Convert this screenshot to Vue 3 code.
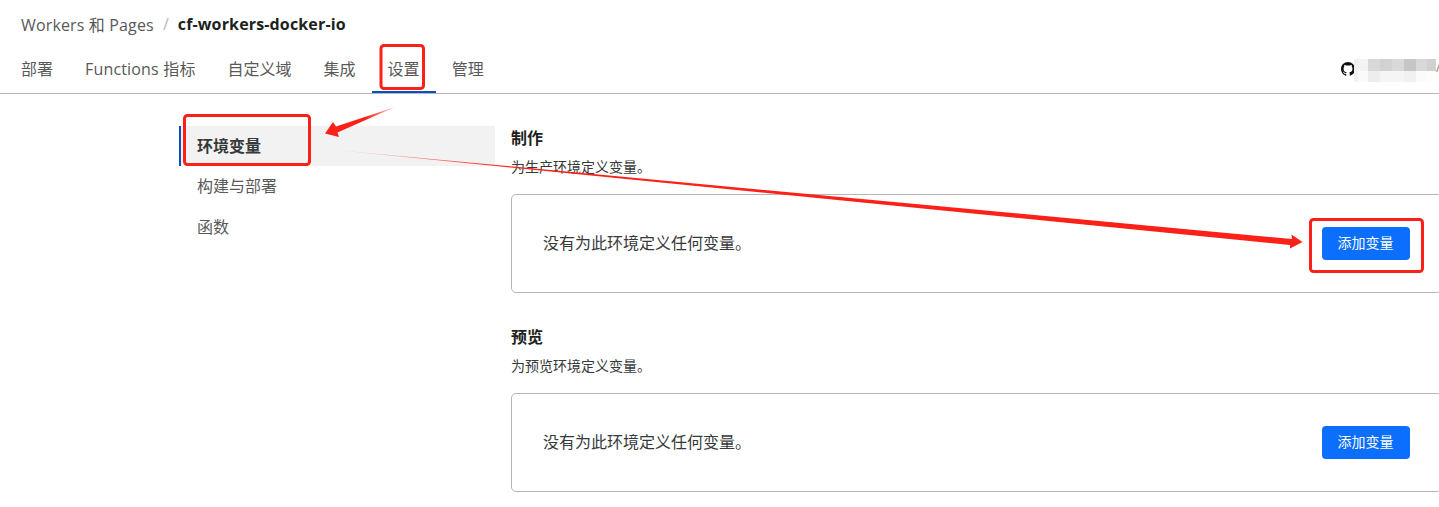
<script setup>
const tabs = ['部署', 'Functions 指标', '自定义域', '集成', '设置', '管理']
const navItems = ['环境变量', '构建与部署', '函数']
const sections = [
  { title: '制作', desc: '为生产环境定义变量。' },
  { title: '预览', desc: '为预览环境定义变量。' },
]
const blurTop = [
  { w: 4, c: '#f0f0f0' },
  { w: 10, c: '#f3f3f3' },
  { w: 12, c: '#d8d8d8' },
  { w: 12, c: '#d2d2d2' },
  { w: 12, c: '#d9d9d9' },
  { w: 12, c: '#c6c6c6' },
  { w: 11, c: '#d8d8d8' },
  { w: 9, c: '#d0d0d0' },
]
const blurBottom = [
  { w: 4, c: '#f0f0f0' },
  { w: 10, c: '#fafafa' },
  { w: 12, c: '#ededed' },
  { w: 12, c: '#f5f5f5' },
  { w: 12, c: '#f5f5f5' },
  { w: 12, c: '#f1f1f1' },
  { w: 11, c: '#fbfbfb' },
  { w: 9, c: '#fdfdfd' },
]
</script>

<template>
  <div class="page">
    <header class="top">
      <div class="crumbs">
        <span class="crumb">Workers 和 Pages</span>
        <span class="sep">/</span>
        <span class="current">cf-workers-docker-io</span>
      </div>
      <div class="tabbar">
        <nav class="tabs">
          <a
            v-for="tab in tabs"
            :key="tab"
            class="tab"
            :class="{ active: tab === '设置', latin: tab.startsWith('Functions') }"
          >{{ tab }}</a>
        </nav>
        <div class="repo">
          <svg class="gh" viewBox="0 0 16 16" width="14" height="14">
            <path fill="#111" d="M8 0C3.58 0 0 3.58 0 8c0 3.54 2.29 6.53 5.47 7.59.4.07.55-.17.55-.38 0-.19-.01-.82-.01-1.49-2.01.37-2.53-.49-2.69-.94-.09-.23-.48-.94-.82-1.13-.28-.15-.68-.52-.01-.53.63-.01 1.08.58 1.23.82.72 1.21 1.87.87 2.33.66.07-.52.28-.87.51-1.07-1.78-.2-3.64-.89-3.64-3.95 0-.87.31-1.59.82-2.15-.08-.2-.36-1.02.08-2.12 0 0 .67-.21 2.2.82.64-.18 1.32-.27 2-.27s1.36.09 2 .27c1.53-1.04 2.2-.82 2.2-.82.44 1.1.16 1.92.08 2.12.51.56.82 1.27.82 2.15 0 3.07-1.87 3.75-3.65 3.95.29.25.54.73.54 1.48 0 1.07-.01 1.93-.01 2.2 0 .21.15.46.55.38A8.01 8.01 0 0 0 16 8c0-4.42-3.58-8-8-8z" />
          </svg>
          <div class="mosaic">
            <div class="mosaic-row">
              <i v-for="(b, i) in blurTop" :key="i" :style="{ width: b.w + 'px', background: b.c }"></i>
            </div>
            <div class="mosaic-row short">
              <i v-for="(b, i) in blurBottom" :key="i" :style="{ width: b.w + 'px', background: b.c }"></i>
            </div>
          </div>
          <span class="slash">/</span>
        </div>
      </div>
    </header>

    <div class="body">
      <aside class="side">
        <a v-for="(item, i) in navItems" :key="item" class="side-item" :class="{ active: i === 0 }">{{ item }}</a>
      </aside>
      <main class="main">
        <section v-for="s in sections" :key="s.title" class="section">
          <h3>{{ s.title }}</h3>
          <p class="desc">{{ s.desc }}</p>
          <div class="card">
            <span class="empty">没有为此环境定义任何变量。</span>
            <button class="btn">添加变量</button>
          </div>
        </section>
      </main>
    </div>

    <!-- red marks drawn on top of the screenshot -->
    <svg class="marks" width="1439" height="507" viewBox="0 0 1439 507">
      <defs>
        <linearGradient id="tail1" gradientUnits="userSpaceOnUse" x1="395" y1="107" x2="365" y2="118">
          <stop offset="0" stop-color="#fb2118" stop-opacity="0.25" />
          <stop offset="1" stop-color="#fb2118" />
        </linearGradient>
        <linearGradient id="tail2" gradientUnits="userSpaceOnUse" x1="335" y1="150" x2="520" y2="168">
          <stop offset="0" stop-color="#fb2118" stop-opacity="0.2" />
          <stop offset="1" stop-color="#fb2118" />
        </linearGradient>
      </defs>
      <g fill="none" stroke="#fb2118" stroke-width="3">
        <rect x="381" y="45.5" width="42.5" height="43" rx="3" />
        <rect x="184.5" y="115.5" width="125" height="49" rx="3" />
        <rect x="1310.5" y="219.5" width="112" height="52" rx="3" />
      </g>
      <polygon fill="url(#tail1)" points="395,107 336,126.5 333,122 325,133.5 339,137 337.5,132.5" />
      <polygon fill="url(#tail2)" points="335,150 1292,239 1291.5,234.5 1302.5,242 1290,248.5 1290,245" />
    </svg>
  </div>
</template>

<style>
html,
body {
  margin: 0;
  background: #fff;
  overflow: hidden;
}
</style>

<style scoped>
.page {
  position: relative;
  width: 1439px;
  height: 507px;
  overflow: hidden;
  font-family: "Open Sans", "Noto Sans CJK SC", sans-serif;
  color: #36393a;
  font-size: 16px;
}

.top {
  height: 93px;
  border-bottom: 1px solid #b6b6b6;
}

.crumbs {
  height: 50px;
  padding: 0 0 2px 21px;
  display: flex;
  align-items: center;
  box-sizing: border-box;
}

.crumb {
  color: #595959;
  letter-spacing: 0.15px;
}

.sep {
  margin: 0 9px;
  color: #b6b6b6;
}

.current {
  font-weight: 700;
  color: #1d1f20;
  letter-spacing: 0.15px;
}

.tabbar {
  height: 43px;
  display: flex;
  justify-content: space-between;
}

.tabs {
  display: flex;
  padding-left: 5px;
}

.tab {
  padding: 0 16px;
  height: 43px;
  line-height: 38px;
  box-sizing: border-box;
  color: #595959;
}

.tab.latin {
  letter-spacing: 0.17px;
}

.tab.active {
  border-bottom: 2px solid #0051c3;
}

.repo {
  display: flex;
  align-items: flex-start;
  padding-top: 9px;
}

.gh {
  margin-top: 3px;
  margin-right: -1px;
  flex: none;
}

.mosaic-row {
  display: flex;
  height: 12px;
}

.mosaic-row.short {
  height: 11px;
}

.mosaic-row i {
  display: block;
}

.slash {
  width: 3px;
  font-size: 12px;
  line-height: 18px;
  color: #777;
}

.body {
  display: flex;
  padding: 32px 0 0 179px;
}

.side {
  width: 316px;
  flex: none;
}

.side-item {
  display: block;
  height: 40px;
  line-height: 40px;
  padding-left: 16px;
  border-left: 2px solid transparent;
  color: #595959;
}

.side-item:last-child {
  margin-top: 1px;
}

.side-item.active {
  border-left-color: #0051c3;
  background: #f2f2f2;
  font-weight: 700;
  color: #36393a;
}

.main {
  margin-left: 16px;
  width: 931px;
  flex: none;
}

.section {
  margin-bottom: 32px;
}

h3 {
  margin: 0;
  font-size: 16px;
  line-height: 24px;
  font-weight: 700;
  color: #1d1f20;
}

.desc {
  margin: 5px 0 0;
  font-size: 14px;
  line-height: 24px;
  color: #36393a;
}

.card {
  margin-top: 15px;
  height: 99px;
  box-sizing: border-box;
  border: 1px solid #b6b6b6;
  border-radius: 5px;
  padding: 0 31px;
  display: flex;
  align-items: center;
  justify-content: space-between;
}

.empty {
  padding-bottom: 3px;
}

.btn {
  width: 88px;
  height: 33px;
  border: 0;
  border-radius: 4px;
  background: #0b6efd;
  color: #fff;
  font: inherit;
  font-size: 14px;
  padding: 0 1px 4px 0;
}

.marks {
  position: absolute;
  left: 0;
  top: 0;
  pointer-events: none;
}
</style>
